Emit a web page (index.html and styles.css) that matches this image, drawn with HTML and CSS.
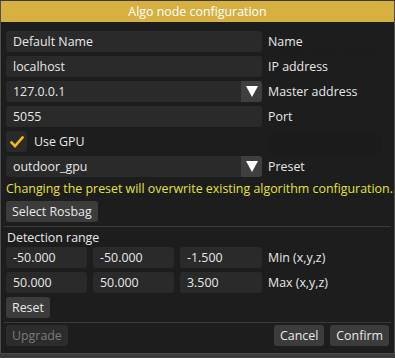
FILE: index.html
```html
<!DOCTYPE html>
<html>
<head>
    <title>Algo node configuration</title>
    <link rel="stylesheet" href="styles.css">
</head>
<body>
    <div class="backdrop">
        <div class="ghost-title">Algo Node Editor</div>
        <div class="ghost-node">Default Name</div>
    </div>

    <div class="window">
        <div class="title">Algo node configuration</div>

        <div class="content">
            <div class="form-grid">
                <div class="field">Default Name</div>
                <span class="label">Name</span>

                <div class="field">localhost</div>
                <span class="label">IP address</span>

                <div class="combo">
                    <div class="field">127.0.0.1</div>
                    <div class="arrow-btn"><span class="arrow"></span></div>
                </div>
                <span class="label">Master address</span>

                <div class="field">5055</div>
                <span class="label">Port</span>
            </div>

            <div class="check-row">
                <div class="checkbox">
                    <svg width="14" height="12" viewBox="0 0 14 12">
                        <path d="M1.5 6.5 L5 10 L12.5 1.5" fill="none" stroke="#f0b81e" stroke-width="2.6" stroke-linecap="square"/>
                    </svg>
                </div>
                <span class="label">Use GPU</span>
            </div>

            <div class="form-grid">
                <div class="combo">
                    <div class="field">outdoor_gpu</div>
                    <div class="arrow-btn"><span class="arrow"></span></div>
                </div>
                <span class="label">Preset</span>
            </div>

            <div class="warning">Changing the preset will overwrite existing algorithm configuration.</div>

            <button class="btn">Select Rosbag</button>

            <div class="separator"></div>

            <div class="section-title">Detection range</div>

            <div class="range-grid">
                <div class="field">-50.000</div>
                <div class="field">-50.000</div>
                <div class="field">-1.500</div>
                <span class="label">Min (x,y,z)</span>

                <div class="field">50.000</div>
                <div class="field">50.000</div>
                <div class="field">3.500</div>
                <span class="label">Max (x,y,z)</span>
            </div>

            <button class="btn">Reset</button>

            <div class="separator bottom"></div>

            <div class="footer">
                <button class="btn disabled">Upgrade</button>
                <div class="footer-right">
                    <button class="btn">Cancel</button>
                    <button class="btn">Confirm</button>
                </div>
            </div>
        </div>
    </div>
</body>
</html>
```

FILE: styles.css
```css
body {
    margin: 0;
    width: 395px;
    height: 358px;
    background-color: #3b3b3b;
    font-family: "Open Sans", "Noto Sans", sans-serif;
    font-size: 12.4px;
    color: #e8e8e8;
    position: relative;
    overflow: hidden;
}

/* faint node editor content showing through the popup */
.backdrop {
    position: absolute;
    left: 0;
    top: 0;
    width: 395px;
    height: 358px;
    z-index: 0;
}

.ghost-title {
    position: absolute;
    left: 278px;
    top: 40px;
    color: #242424;
    font-size: 13px;
}

.ghost-node {
    position: absolute;
    left: 268px;
    top: 134px;
    width: 114px;
    height: 20px;
    line-height: 20px;
    border-radius: 4px;
    background-color: #22221a;
    color: #2b2a1e;
    text-align: center;
}

.window {
    position: relative;
    z-index: 1;
    box-sizing: border-box;
    width: 395px;
    height: 353px;
    border: 1px solid #4e4e4e;
    border-top: none;
    margin-top: 1px;
    background-color: rgba(27, 27, 27, 0.92);
}

.title {
    height: 21px;
    line-height: 21px;
    background-color: #d7b042;
    color: #ffffff;
    text-align: center;
}

.content {
    padding: 9px 5px 0 5px;
}

.form-grid {
    display: grid;
    grid-template-columns: 256px auto;
    column-gap: 6px;
    row-gap: 4px;
    align-items: center;
    margin-bottom: 4px;
}

.field {
    box-sizing: border-box;
    height: 21px;
    line-height: 21px;
    padding: 0 7px;
    background-color: #2a2a2a;
    border-radius: 3px;
    white-space: nowrap;
    overflow: hidden;
}

.label {
    white-space: nowrap;
}

.combo {
    display: flex;
}

.combo .field {
    flex: 1;
    border-radius: 3px 0 0 3px;
}

.arrow-btn {
    width: 21px;
    height: 21px;
    background-color: #3f3f3f;
    border-radius: 0 3px 3px 0;
    display: flex;
    align-items: center;
    justify-content: center;
}

.arrow {
    width: 0;
    height: 0;
    border-left: 6px solid transparent;
    border-right: 6px solid transparent;
    border-top: 11px solid #ffffff;
}

.check-row {
    display: flex;
    align-items: center;
    gap: 7px;
    margin-bottom: 4px;
}

.checkbox {
    width: 21px;
    height: 21px;
    background-color: #2a2a2a;
    border-radius: 3px;
    display: flex;
    align-items: center;
    justify-content: center;
}

.warning {
    color: #e6e23c;
    height: 16px;
    line-height: 16px;
    white-space: nowrap;
    margin-bottom: 4px;
}

.btn {
    font-family: inherit;
    font-size: 12.4px;
    color: #e8e8e8;
    background-color: #3c3c3c;
    border: none;
    border-radius: 3px;
    height: 21px;
    padding: 0 6px;
    display: block;
}

.btn.disabled {
    color: #7a7a7a;
    background-color: #2c2c2c;
}

.separator {
    height: 1px;
    background-color: #3a3a3a;
    margin: 4px -2px 3px -2px;
}

.separator.bottom {
    margin-bottom: 2px;
}

.section-title {
    height: 17px;
    line-height: 16px;
    padding-left: 1px;
    margin-bottom: 0;
}

.range-grid {
    display: grid;
    grid-template-columns: 81px 81px 82px auto;
    column-gap: 6px;
    row-gap: 4px;
    align-items: center;
    margin-bottom: 4px;
}

.footer {
    display: flex;
    justify-content: space-between;
    align-items: center;
}

.footer-right {
    display: flex;
    gap: 6px;
}
```
